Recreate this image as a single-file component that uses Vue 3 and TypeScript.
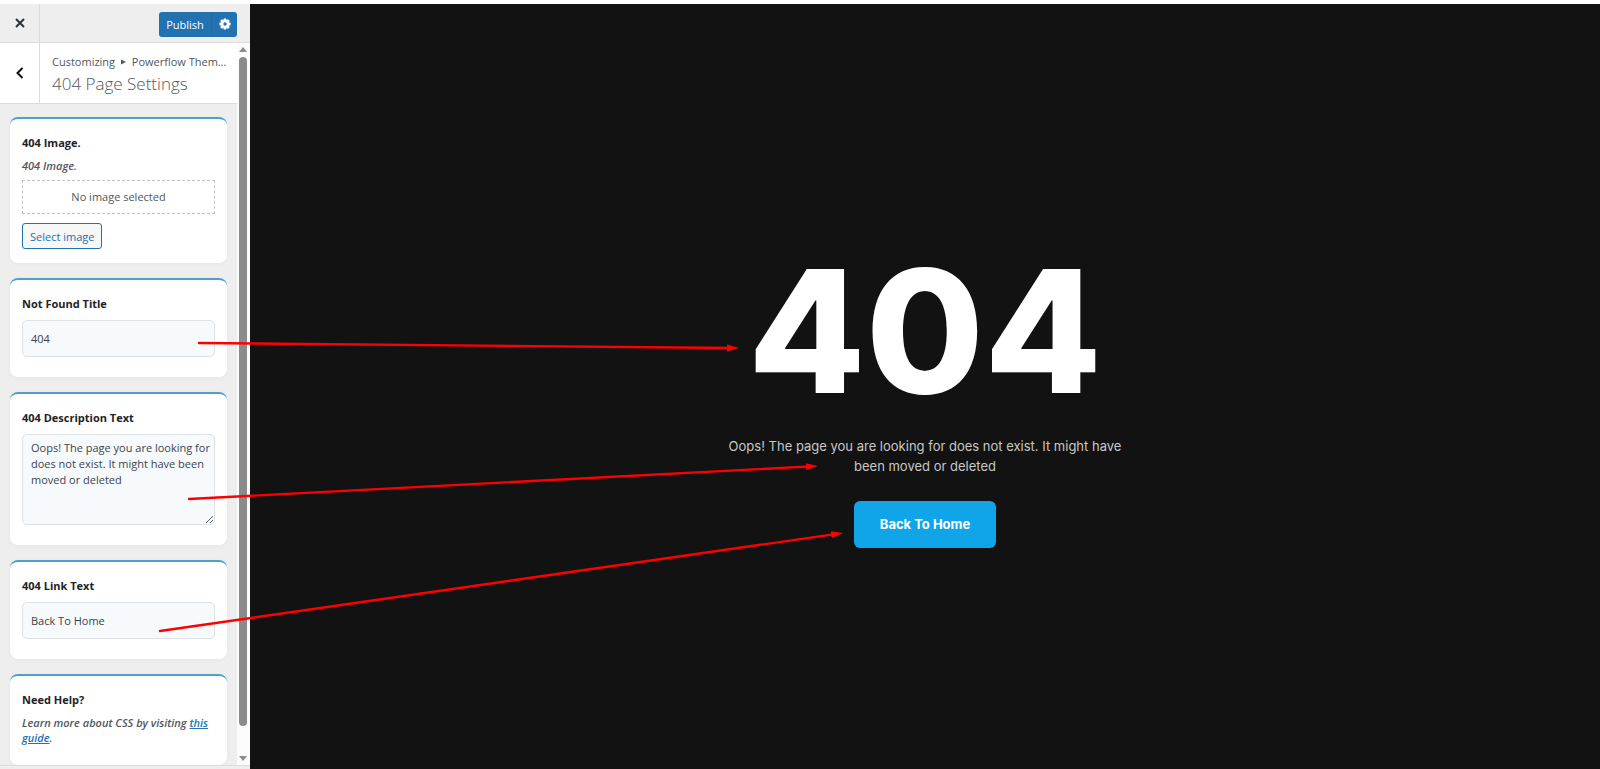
<script setup lang="ts">
import { ref } from 'vue'

interface Arrow {
  from: [number, number]
  to: [number, number]
}

const title = ref('404')
const description = ref('Oops! The page you are looking for does not exist. It might have been moved or deleted')
const linkText = ref('Back To Home')

const arrows: Arrow[] = [
  { from: [199, 343], to: [739, 348] },
  { from: [189, 499], to: [818, 466] },
  { from: [160, 631], to: [843, 533] },
]
</script>

<template>
  <div class="app">
    <aside class="sidebar">
      <header class="topbar">
        <button class="close" type="button" aria-label="Close">
          <svg width="10" height="10" viewBox="0 0 10 10"><path d="M1 1l8 8M9 1l-8 8" /></svg>
        </button>
        <div class="publish">
          <button class="save" type="button">Publish</button>
          <button class="gear" type="button" aria-label="Publish settings">
            <svg width="12" height="12" viewBox="0 0 12 12">
              <g fill="#fff">
                <rect v-for="n in 4" :key="n" x="4.6" y="0.4" width="2.8" height="11.2" rx="0.7" :transform="`rotate(${(n - 1) * 45} 6 6)`" />
                <circle cx="6" cy="6" r="4.1" />
              </g>
              <circle cx="6" cy="6" r="1.7" fill="#2271b1" />
            </svg>
          </button>
        </div>
      </header>

      <div class="panel">
        <div class="controls">
          <div class="section-head">
            <button class="back" type="button" aria-label="Back">
              <svg width="8" height="12" viewBox="0 0 8 12"><path d="M6.5 1L1.5 6l5 5" /></svg>
            </button>
            <div class="heading">
              <span class="crumb">Customizing <svg width="5" height="6" viewBox="0 0 5 6"><path d="M0 .5v5L5 3z" /></svg> Powerflow Them…</span>
              <h3>404 Page Settings</h3>
            </div>
          </div>

          <div class="cards">
            <section class="card image-card">
              <h4>404 Image.</h4>
              <p class="note">404 Image.</p>
              <div class="placeholder">No image selected</div>
              <button class="select" type="button">Select image</button>
            </section>
            <section class="card field-card">
              <label for="nf-title">Not Found Title</label>
              <input id="nf-title" v-model="title" type="text" />
            </section>
            <section class="card field-card">
              <label for="nf-desc">404 Description Text</label>
              <textarea id="nf-desc" v-model="description" spellcheck="false"></textarea>
            </section>
            <section class="card field-card">
              <label for="nf-link">404 Link Text</label>
              <input id="nf-link" v-model="linkText" type="text" />
            </section>
            <section class="card help-card">
              <h4>Need Help?</h4>
              <p class="note">Learn more about CSS by visiting <a href="#">this guide</a>.</p>
            </section>
          </div>
        </div>
        <div class="scrollbar" aria-hidden="true">
          <svg width="8" height="5" viewBox="0 0 8 5"><path d="M0 5L4 0l4 5z" /></svg>
          <div class="thumb"></div>
          <svg width="8" height="5" viewBox="0 0 8 5"><path d="M0 0h8L4 5z" /></svg>
        </div>
      </div>
      <footer class="bottom"></footer>
    </aside>

    <main class="preview">
      <h1>{{ title }}</h1>
      <p>{{ description }}</p>
      <a class="home" href="#">{{ linkText }}</a>
    </main>

    <svg class="arrows" width="860" height="660" aria-hidden="true">
      <defs>
        <marker id="head" markerUnits="userSpaceOnUse" markerWidth="12" markerHeight="8" refX="12" refY="4" orient="auto">
          <path d="M0 0.5L12 4 0 7.5z" fill="#f00" />
        </marker>
      </defs>
      <g v-for="(a, i) in arrows" :key="i">
        <line :x1="a.from[0]" :y1="a.from[1]" :x2="a.to[0] - 8" :y2="a.to[1] - (8 * (a.to[1] - a.from[1])) / (a.to[0] - a.from[0])" />
        <line class="tip" :x1="a.from[0]" :y1="a.from[1]" :x2="a.to[0]" :y2="a.to[1]" marker-end="url(#head)" />
      </g>
    </svg>
  </div>
</template>

<style>
body {
  margin: 0;
  background: #fff;
}
</style>

<style scoped>
* {
  box-sizing: border-box;
}
.app {
  position: relative;
  display: grid;
  grid-template-columns: 250px 1fr;
  height: 100vh;
  padding-top: 4px;
  overflow: hidden;
  font-family: 'Open Sans', 'Noto Sans', sans-serif;
  font-size: 11px;
  color: #3c434a;
}
h1, h3, h4, p {
  margin: 0;
}
button, input, textarea {
  font: inherit;
  color: inherit;
}
button {
  padding: 0;
  border: 0;
  background: none;
  cursor: pointer;
}
.sidebar {
  display: flex;
  flex-direction: column;
  min-height: 0;
  background: #eee;
}
.topbar {
  display: flex;
  flex: none;
  align-items: center;
  justify-content: space-between;
  height: 39px;
  padding-right: 13px;
  border-bottom: 1px solid #dcdcde;
}
.close {
  display: grid;
  place-items: center;
  width: 40px;
  height: 38px;
  border-right: 1px solid #dcdcde;
}
.close path, .back path {
  fill: none;
  stroke: #2c3338;
  stroke-width: 2;
}
.back path {
  stroke: #111;
}
.publish {
  display: flex;
  height: 25px;
  margin-top: 2px;
  border-radius: 3px;
  background: #2271b1;
  color: #fff;
}
.save {
  width: 53px;
  border-right: 1px solid #206cab;
}
.gear {
  display: grid;
  place-items: center;
  width: 25px;
}
.panel {
  display: flex;
  flex: 1;
  min-height: 0;
}
.controls {
  flex: 1;
  min-width: 0;
  overflow: hidden;
}
.section-head {
  display: flex;
  height: 61px;
  border-bottom: 1px solid #dcdcde;
  background: #fff;
}
.back {
  display: grid;
  flex: none;
  place-items: center;
  width: 40px;
  border-right: 1px solid #dcdcde;
}
.heading {
  min-width: 0;
  padding: 9px 8px 0 12px;
  color: #50575e;
}
.crumb {
  display: block;
  line-height: 20px;
  white-space: nowrap;
}
.crumb svg {
  margin: 0 3px 1px;
  fill: #50575e;
}
.heading h3 {
  font-size: 17px;
  font-weight: 300;
  line-height: 24px;
}
.cards {
  display: flex;
  flex-direction: column;
  gap: 15px;
  padding: 13px 10px 0;
}
.card {
  display: flex;
  flex-direction: column;
  padding: 15px 12px 20px;
  border-top: 2px solid #4f9fcb;
  border-radius: 8px;
  background: #fff;
  box-shadow: 0 1px 4px rgba(0, 0, 0, 0.04);
}
.card h4, .card label {
  color: #1d2327;
  font-size: 11px;
  font-weight: 700;
  line-height: 18px;
}
.note {
  margin-top: 6px;
  color: #50575e;
  font-style: italic;
  font-weight: 600;
  line-height: 15px;
}
.note a {
  color: #2271b1;
}
.image-card {
  padding-bottom: 14px;
}
.placeholder {
  margin: 7px 0 9px;
  border: 1px dashed #c3c4c7;
  line-height: 32px;
  text-align: center;
  color: #50575e;
}
.select {
  align-self: flex-start;
  height: 26px;
  padding: 0 7px;
  border: 1px solid #2271b1;
  border-radius: 3px;
  background: #f6f7f7;
  color: #2271b1;
}
.field-card {
  gap: 7px;
}
input, textarea {
  display: block;
  width: 100%;
  margin: 0;
  border: 1px solid #dfe2e4;
  border-radius: 5px;
  outline: none;
  background: #f6fafd;
}
input {
  height: 37px;
  padding: 0 8px;
}
textarea {
  height: 91px;
  padding: 5px 2px 5px 8px;
  line-height: 16px;
  resize: vertical;
}
.scrollbar {
  display: flex;
  flex: none;
  flex-direction: column;
  align-items: center;
  gap: 5px;
  width: 13px;
  padding: 4px 1px 4px 0;
  background: #fcfcfc;
}
.scrollbar svg {
  fill: #8b8b8b;
}
.thumb {
  flex: 1;
  width: 8px;
  margin-bottom: 25px;
  border-radius: 4px;
  background: #8b8b8b;
}
.bottom {
  flex: none;
  height: 4px;
  border-top: 1px solid #dcdcde;
}
.preview {
  display: flex;
  flex-direction: column;
  align-items: center;
  justify-content: center;
  background: #121212;
  font-family: Inter, sans-serif;
  text-align: center;
}
.preview h1 {
  color: #fff;
  font-size: 171px;
  font-weight: 800;
  line-height: 210px;
}
.preview p {
  max-width: 410px;
  margin-bottom: 25px;
  color: #c8c8c8;
  font-size: 13px;
  line-height: 20px;
}
.home {
  padding: 0 26px;
  border-radius: 6px;
  background: #10a5e9;
  color: #fff;
  font-size: 13px;
  font-weight: 700;
  line-height: 47px;
  text-decoration: none;
}
.arrows {
  position: absolute;
  top: 0;
  left: 0;
  pointer-events: none;
}
.arrows line {
  stroke: #f00;
  stroke-width: 2.4;
  stroke-linecap: round;
}
.arrows .tip {
  stroke: none;
}
</style>
